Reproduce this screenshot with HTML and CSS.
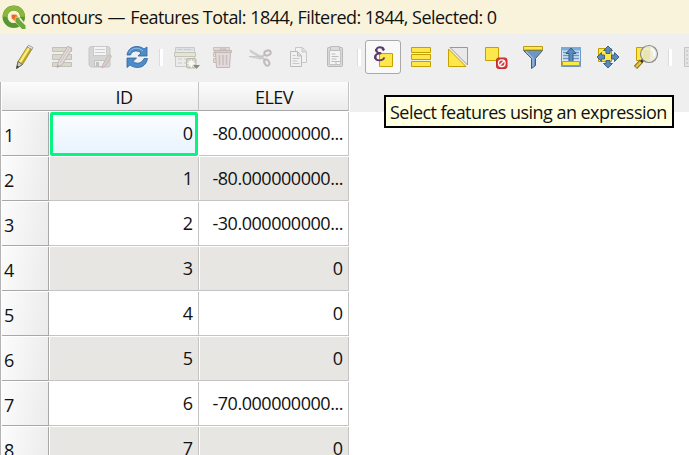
FILE: index.html
```html
<!DOCTYPE html>
<html lang="en">
<head>
<meta charset="utf-8">
<title>contours</title>
<link rel="stylesheet" href="styles.css">
</head>
<body>
<header class="titlebar">
  <svg class="logo" width="26" height="26" viewBox="0 0 26 26">
    <circle cx="11.800" cy="11.800" r="8.800" fill="none" stroke="#589632" stroke-width="5"/>
    <path d="M3 11.800a8.800 8.800 0 0 1 17.600 0" fill="none" stroke="#8cb63c" stroke-width="4.600"/>
    <path d="M12 12l5-1 8 10-1 4-4-1-7-7z" fill="#f9f3dc"/>
    <path d="M13.500 12.500h4v2l6 6v3.500h-3.500L13.500 17z" fill="#6da63d"/>
    <path d="M9.500 9.500h5l1.500 2-2.500 1v4l-4-3z" fill="#f28a2e"/>
    <path d="M10 10h4l-2 4-2-1z" fill="#e8632b"/>
  </svg>
  <span class="title">contours <span class="dash">—</span> Features Total: 1844, Filtered: 1844, Selected: 0</span>
</header>

<nav class="toolbar">
  <span class="tool"><svg viewBox="0 0 24 24"><path d="M3.500 23.500l1.500-7L14.500 1.500l4.500 2.500L9.500 19.500z" fill="#e6cd3c" stroke="#8d7d2b" stroke-width=".8"/><path d="M7 17.500L16 3" stroke="#fff08a" stroke-width="1.500"/><path d="M8.800 19L18 4" stroke="#b29a26" stroke-width="1.300"/><path d="M3.500 23.500l1.500-7 4.500 3z" fill="#c9c9c9" stroke="#555" stroke-width=".8"/><path d="M3.500 23.500l.7-3 1.800 1.200z" fill="#333"/><path d="M14.200 1.800L15.500.2l4.300 2.300-1 2z" fill="#eee" stroke="#777" stroke-width=".7"/></svg></span>
  <span class="tool"><svg viewBox="0 0 24 24"><g fill="#dad8cb" stroke="#c3c1b5"><path d="M2.500 2.500h19v4h-19zM2.500 9.500h19v5h-19zM2.500 17.500h19v4h-19z"/></g><path d="M7 22.500l1.200-5.500L18 1.200l4 2.500-10 16z" fill="#e3dcda" stroke="#beb5b2"/><path d="M10 18l9.500-15" stroke="#cdc3c0"/><path d="M7 22.500l.7-3 2 1.400z" fill="#aaa"/></svg></span>
  <span class="tool"><svg viewBox="0 0 24 24"><path d="M1 3l1.500-1.500h18L22 3v18l-1 1H3l-2-2z" fill="#d5d5d5" stroke="#c6c6c6"/><path d="M5.500 1.500h13v9h-13z" fill="#f5f5f5" stroke="#c9c9c9"/><path d="M7 4.500h10M7 7.500h10" stroke="#ccc"/><path d="M6.500 15.500h10v6h-10z" fill="#ededed" stroke="#c2c2c2"/><path d="M8 17h3v4H8z" fill="#c2c2c2"/><path d="M14 23l1-4 6-9.500 2.500 1.500-6 10z" fill="#d8cdca" stroke="#c0b4b1" stroke-width=".8"/></svg></span>
  <span class="tool"><svg viewBox="0 0 24 24"><g fill="#4d8cca" stroke="#31639c" stroke-width=".8"><path d="M2 10C3 4 7 1.500 12 1.500c3 0 5 1 7 2.500l3-2v9h-9l3-3C13 5 7 5 5.500 10z"/><path d="M22.500 13.500C21.500 19.500 17.500 22.500 12.500 22.500c-3 0-5.500-1-7.500-2.500L2 22.500V13h9.500l-3.500 3.500c4 3 8.500 2 11-3z"/></g><path d="M4 8C6 3 13 1.500 18 6" fill="none" stroke="#8dbbe4"/></svg></span>
  <span class="sep"></span>
  <span class="tool"><svg viewBox="0 0 24 24"><g fill="#ebebeb" stroke="#c8cbcc"><path d="M2.500 2.500h19v19h-19z"/><path d="M3 3h18v3H3z" fill="#dce1e4" stroke="none"/><path d="M5 14h4m2 0h4M5 18h4m2 0h3M5 4.500h4m2 0h7" stroke-width="1.200"/></g><path d="M1.500 7.500h21v4h-21z" fill="#e6e4d7" stroke="#c5c3b5"/><rect x="13.500" y="13.500" width="9.500" height="9.500" rx="1.500" fill="#cfccc0" stroke="#bdbab0"/><path d="M18.300 14.500v8m-4-4h8m-6.800-2.800l5.600 5.600m0-5.600l-5.600 5.600" stroke="#f8f8f4" stroke-width="1.400"/><path d="M20 20h7l-3.500 4z" fill="#888"/></svg></span>
  <span class="tool"><svg viewBox="0 0 24 24"><path d="M2.500 2.500h16v3h-16zM2.500 7.500h16v4h-16zM2.500 13.500h16v4h-16z" fill="#dedbcf" stroke="#c7c3b6"/><path d="M4.500 7.500h15l-1 15h-13z" fill="#e2dada" stroke="#c4b7b7"/><path d="M3.500 7.500v-2h17v2zM9 5.500v-1.500h6v1.500" fill="#d8cccc" stroke="#c4b7b7"/><path d="M8.500 10v10m3.500-10v10m3.500-10v10" stroke="#c9bebe" stroke-width="1.500"/></svg></span>
  <span class="tool"><svg viewBox="0 0 24 24"><path d="M2 5l14 8 2 3L2.500 7zM1 11.500h11l5-2-4 4.500z" fill="#d9d9d9" stroke="#c1c1c1" stroke-width=".8"/><g fill="none" stroke="#c1bcbc" stroke-width="2"><ellipse cx="19.500" cy="8" rx="3.300" ry="2.400" transform="rotate(-20 19.500 8)"/><ellipse cx="18.800" cy="17.500" rx="2.300" ry="3.300" transform="rotate(-30 18.800 17.500)"/></g></svg></span>
  <span class="tool"><svg viewBox="0 0 24 24"><g fill="#f1f1f1" stroke="#c8c8c8"><path d="M9.500 2.500h7l4 4v11h-11z"/><path d="M16 3v4h4" fill="#ddd"/><path d="M4.500 6.500h7l4 4v11h-11z" stroke="#bbb"/><path d="M11.500 7v4h4" fill="#ddd" stroke="#bbb"/><path d="M6.500 10.500h3m-3 3h7m-7 2.500h5m-5 2.500h7"/></g></svg></span>
  <span class="tool"><svg viewBox="0 0 24 24"><rect x="4.500" y="2.500" width="15" height="19" rx="1" fill="#d9d8d4" stroke="#bab9b5"/><path d="M6.500 5.500h11v14h-11z" fill="#f4f4f4" stroke="#c4c4c4"/><path d="M7.500 1.500h9v4h-9z" fill="#ddd" stroke="#bcbcbc"/><path d="M8.500 9h4m-4 2.500h7m-7 2.500h5m-5 2.500h5" stroke="#bcbcbc"/><path d="M13 19.500v-3h4" fill="none" stroke="#bcbcbc"/></svg></span>
  <span class="sep"></span>
  <span class="tool"><span class="pressed"><svg viewBox="0 0 24 24"><path d="M8.500 8.500h13v13h-13z" fill="#fee74b" stroke="#c4a000"/><path d="M12.700 4.800C12.200 1.500 5.300 1.300 5.300 5c0 2.300 2 3.200 5 3.200C6.500 8.300 4.200 9.400 4.200 12c0 4.500 7.800 4.300 9.200.5" fill="none" stroke="#5b3a6b" stroke-width="1.900"/><path d="M5.200 4v2.500M4.300 10.500v3.500M11.500 3.500l1.500 2" stroke="#5b3a6b" stroke-width="2.200"/></svg></span></span>
  <span class="tool"><svg viewBox="0 0 24 24"><path d="M2.500 2.500h19v5h-19zM2.500 9.500h19v5h-19zM2.500 16.500h19v5h-19z" fill="#fee74b" stroke="#c4a000"/></svg></span>
  <span class="tool"><svg viewBox="0 0 24 24"><path d="M4 2.500h17.500v17.500z" fill="#e9e9e9" stroke="#999"/><path d="M2.500 4v17.500h17.500z" fill="#fee74b" stroke="#c4a000"/></svg></span>
  <span class="tool"><svg viewBox="0 0 24 24"><path d="M1.500 2.500h13v13h-13z" fill="#fee74b" stroke="#c4a000"/><rect x="12.500" y="13" width="10.500" height="10.500" rx="2" fill="#d93a3a" stroke="#c52b2b"/><circle cx="17.800" cy="18.200" r="3.300" fill="#d93a3a" stroke="#fff" stroke-width="1.300"/><path d="M15.500 20.500l4.500-4.500" stroke="#fff" stroke-width="1.400"/></svg></span>
  <span class="tool"><svg viewBox="0 0 24 24"><path d="M2.500 5.500h19l-7 8v7l-4 3v-10z" fill="#6d97c4" stroke="#415a75"/><path d="M5 6.500l7 7v8" fill="none" stroke="#9dbde0" stroke-width="1.200"/><path d="M2.500 1.500h19v3.500h-19z" fill="#fee74b" stroke="#b89b16"/></svg></span>
  <span class="tool"><svg viewBox="0 0 24 24"><path d="M2.500 2.500h19v19h-19z" fill="#d7e9f7" stroke="#6d97c4"/><path d="M2 2h20v3.500H2z" fill="#7aaad6"/><path d="M4 7.500h16M4 10.500h16M4 13.500h16" stroke="#6d97c4" stroke-width="1.500"/><path d="M12 3l5 5.500h-3V16.500h-4V8.500H7z" fill="#5b8bbd" stroke="#345b80"/><path d="M3.500 16.500h17v4h-17z" fill="#fee74b" stroke="#c4a000"/></svg></span>
  <span class="tool"><svg viewBox="0 0 24 24"><path d="M2.500 3.500h13v13h-13z" fill="#fee74b" stroke="#c4a000"/><g fill="#5b8bbd" stroke="#345b80" stroke-width=".9"><path id="arrow" d="M12 1l4.500 4.500h-2.500v3h-4v-3H7.500z"/><use href="#arrow" transform="rotate(90 12 12)"/><use href="#arrow" transform="rotate(180 12 12)"/><use href="#arrow" transform="rotate(270 12 12)"/></g></svg></span>
  <span class="tool"><svg viewBox="0 0 24 24"><path d="M2.500 2.500h13v13h-13z" fill="#fee74b" stroke="#c4a000"/><path d="M1.500 22.500l6-6.500" stroke="#806c21" stroke-width="4.500"/><path d="M2 22l5.500-5.800" stroke="#edc53b" stroke-width="2.500"/><path d="M7 17l3-3" stroke="#333" stroke-width="3"/><circle cx="15" cy="9" r="8.500" fill="#eeeedd" fill-opacity=".88" stroke="#888" stroke-width="1.200"/><path d="M9 5h6.500v9.500H9z" fill="#e7e2a8" opacity=".8"/><path d="M17 4c3 1 4 4 3 7" fill="none" stroke="#fff" stroke-width="1.500"/></svg></span>
  <span class="sep"></span>
  <span class="tool"><svg viewBox="0 0 24 24"><path d="M2.500 2.500h19v19h-19z" fill="#e3e3e3" stroke="#c6c6c6"/><path d="M4 6h2m-2 4h2m-2 4h2m-2 4h2M7.500 3v18" stroke="#bbb"/></svg></span>
</nav>

<main class="view">
  <div class="grid">
    <div class="head"></div><div class="head">ID</div><div class="head">ELEV</div>
    <div class="num">1</div><div class="cell current">0</div><div class="cell"><span class="dec">-80.000000000...</span></div>
    <div class="num">2</div><div class="cell alt">1</div><div class="cell alt"><span class="dec">-80.000000000...</span></div>
    <div class="num">3</div><div class="cell">2</div><div class="cell"><span class="dec">-30.000000000...</span></div>
    <div class="num">4</div><div class="cell alt">3</div><div class="cell alt">0</div>
    <div class="num">5</div><div class="cell">4</div><div class="cell">0</div>
    <div class="num">6</div><div class="cell alt">5</div><div class="cell alt">0</div>
    <div class="num">7</div><div class="cell">6</div><div class="cell"><span class="dec">-70.000000000...</span></div>
    <div class="num">8</div><div class="cell alt">7</div><div class="cell alt">0</div>
  </div>
  <div class="blank"></div>
</main>
<div class="tooltip"><span class="tip">Select features using an expression</span></div>
</body>
</html>
```
FILE: styles.css
```css
* { box-sizing: border-box; }
body {
  margin: 0;
  width: 689px;
  height: 455px;
  overflow: hidden;
  position: relative;
  background: #efefef;
  color: #111;
  font-family: "Open Sans", "Noto Sans", sans-serif;
  font-size: 18px;
}
.titlebar {
  height: 34px;
  display: flex;
  align-items: center;
  padding-left: 2px;
  background: #f9f3dc;
}
.logo { flex: none; margin-top: 1px; }
.title { margin-left: 4px; letter-spacing: -0.54px; white-space: nowrap; }
.dash { margin: 0 1px; }
.toolbar {
  height: 48px;
  display: flex;
  align-items: center;
  padding: 0 0 2px 5.75px;
  overflow: hidden;
}
.tool {
  flex: none;
  width: 37.5px;
  display: flex;
  justify-content: center;
}
.tool svg { display: block; width: 24px; height: 24px; overflow: visible; flex: none; }
.pressed {
  flex: none;
  width: 36px;
  height: 34px;
  display: flex;
  align-items: center;
  justify-content: center;
  border: 1px solid #a9a9a9;
  border-radius: 3px;
  background: #f9f9f9;
}
.sep { flex: none; width: 10.5px; display: flex; justify-content: center; }
.sep::before {
  content: "";
  width: 3px;
  height: 17px;
  border-left: 1px solid #dcdcdc;
  background: #fff;
}
.view { display: flex; height: 373px; }
.grid {
  flex: none;
  width: 350px;
  display: grid;
  grid-template-columns: 47px 150px 150px;
  grid-template-rows: 30px repeat(8, 45px);
  border-left: 1px solid #b4b4b4;
  padding-left: 1px;
  background: #fff;
}
.blank { flex: 1; margin-top: 30px; background: #fff; }
.head {
  display: flex;
  align-items: center;
  justify-content: center;
  height: 29px;
  padding-top: 1px;
  border-bottom: 1px solid #a8a8a8;
  background: linear-gradient(#fcfcfc, #ebebeb);
  letter-spacing: -0.5px;
}
.head + .head { border-right: 1px solid #c4c4c4; padding-left: 1px; }
.num {
  display: flex;
  align-items: center;
  width: 47px;
  height: 44px;
  padding: 2px 0 0 2px;
  border-right: 1px solid #a8a8a8;
  border-bottom: 1px solid #a8a8a8;
  background: linear-gradient(100deg, #fcfcfc, #ebebeb);
}
.cell {
  display: flex;
  align-items: center;
  justify-content: flex-end;
  height: 44px;
  padding: 0 5px 2px 0;
  border-right: 1px solid #c4c4c4;
  border-bottom: 1px solid #c4c4c4;
}
.alt { background: #e7e6e2; box-shadow: inset 1px 0 #fff; }
.current {
  margin-left: 1px;
  width: 148px;
  border: 3px solid #05f580;
  border-radius: 2px;
  padding-right: 2px;
  background: linear-gradient(#fafdff, #e8f4fe);
}
.dec { letter-spacing: -0.46px; white-space: nowrap; }
.tooltip {
  position: absolute;
  left: 384px;
  top: 95px;
  width: 290px;
  height: 33px;
  display: flex;
  align-items: center;
  padding: 1px 0 0 4px;
  border: 2px solid #000;
  background: #ffffe1;
}
.tip { letter-spacing: -0.54px; white-space: nowrap; }
```
